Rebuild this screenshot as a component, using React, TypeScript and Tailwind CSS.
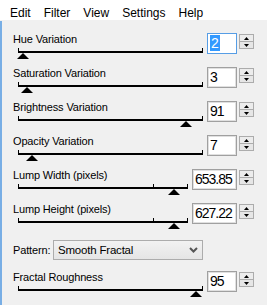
import React from "react";

type Row = {
  label: string;
  value: string;
  thumb: number; // thumb centre, page x
  wide?: boolean;
  focused?: boolean;
};

const rows: Row[] = [
  { label: "Hue Variation", value: "2", thumb: 22.5, focused: true },
  { label: "Saturation Variation", value: "3", thumb: 26.5 },
  { label: "Brightness Variation", value: "91", thumb: 186 },
  { label: "Opacity Variation", value: "7", thumb: 31.5 },
  { label: "Lump Width (pixels)", value: "653.85", thumb: 174, wide: true },
  { label: "Lump Height (pixels)", value: "627.22", thumb: 174, wide: true },
];

const menu = ["Edit", "Filter", "View", "Settings", "Help"];

function Thumb({ x }: { x: number }) {
  // track starts at page x 18, plus its 1px left border
  return (
    <svg
      width="12"
      height="6"
      viewBox="0 0 12 6"
      className="absolute top-[5px]"
      style={{ left: x - 18 - 1 - 6 }}
    >
      <polygon points="6,0 12,6 0,6" fill="#000" />
    </svg>
  );
}

function Spinner() {
  return (
    <div className="mt-px flex h-[16px] w-[15px] flex-col">
      <div className="flex h-[8px] items-center justify-center border border-[#acacac] bg-[#ececec]">
        <svg width="5" height="3" viewBox="0 0 5 3">
          <polygon points="2.5,0 5,3 0,3" fill="#000" />
        </svg>
      </div>
      <div className="-mt-px flex h-[8px] items-center justify-center border border-[#acacac] bg-[#e6e6e6]">
        <svg width="5" height="3" viewBox="0 0 5 3">
          <polygon points="0,0 5,0 2.5,3" fill="#000" />
        </svg>
      </div>
    </div>
  );
}

function NumberBox({ value, wide, focused }: { value: string; wide?: boolean; focused?: boolean }) {
  return (
    <div className="flex items-start gap-[2px]">
      <div
        className={
          (wide ? "w-[45px] " : "w-[30px] ") +
          (focused
            ? "border-[#569de5] "
            : "border-[#a0a0a0] shadow-[inset_0_0_0_1px_#e0e0e0] ") +
          "h-[21px] border bg-white pl-[2px] pt-[2px] text-[14px] leading-[15px] tracking-[-1px] text-black"
        }
      >
        {focused ? <span className="bg-[#3399ff] pl-px pr-[2px] text-white">{value}</span> : value}
      </div>
      <Spinner />
    </div>
  );
}

function SliderRow({ row }: { row: Row }) {
  return (
    <div className="flex h-[34px] justify-between">
      <div className="flex flex-col">
        <span className="text-[11px] leading-[13px] tracking-[-0.15px]">{row.label}</span>
        <div
          className={
            (row.wide ? "w-[170px] " : "w-[185px] ") +
            "relative ml-[5px] mt-[2px] h-[5px] border-x border-b-2 border-black"
          }
        >
          {row.wide && <div className="absolute left-[134px] top-0 h-[3px] w-px bg-black" />}
          <Thumb x={row.thumb} />
        </div>
      </div>
      <NumberBox value={row.value} wide={row.wide} focused={row.focused} />
    </div>
  );
}

export default function App() {
  return (
    <div
      className="flex h-[305px] w-[267px] flex-col overflow-hidden bg-[#f0f0f0] text-black"
      style={{ fontFamily: '"Liberation Sans", Arial, sans-serif' }}
    >
      <div className="flex h-[20px] gap-[13px] bg-white pl-[10px] pt-[7px] text-[12px] leading-[13px]">
        {menu.map((m) => (
          <span key={m}>{m}</span>
        ))}
      </div>
      <div className="flex flex-1">
        <div className="mt-[1px] w-[2px] bg-[#78aee5]" />
        <div className="flex flex-1 flex-col pl-[11px] pr-[13px] pt-[13px]">
          {rows.map((r) => (
            <SliderRow key={r.label} row={r} />
          ))}

          <div className="mt-[3px] flex h-[20px] items-center">
            <span className="w-[40px] text-[11px] leading-[13px] tracking-[-0.15px]">Pattern:</span>
            <div className="flex h-[20px] w-[150px] items-center justify-between border border-[#acacac] bg-gradient-to-b from-[#f2f2f2] to-[#e5e5e5] pl-[4px] pr-[4px]">
              <span className="text-[11.5px] leading-[13px] tracking-[-0.2px]">Smooth Fractal</span>
              <svg width="9" height="6" viewBox="0 0 9 6">
                <polyline points="1,1 4.5,4.5 8,1" fill="none" stroke="#555" strokeWidth="2" />
              </svg>
            </div>
          </div>

          <div className="mt-[11px]">
            <SliderRow row={{ label: "Fractal Roughness", value: "95", thumb: 195.5 }} />
          </div>
        </div>
      </div>
    </div>
  );
}
